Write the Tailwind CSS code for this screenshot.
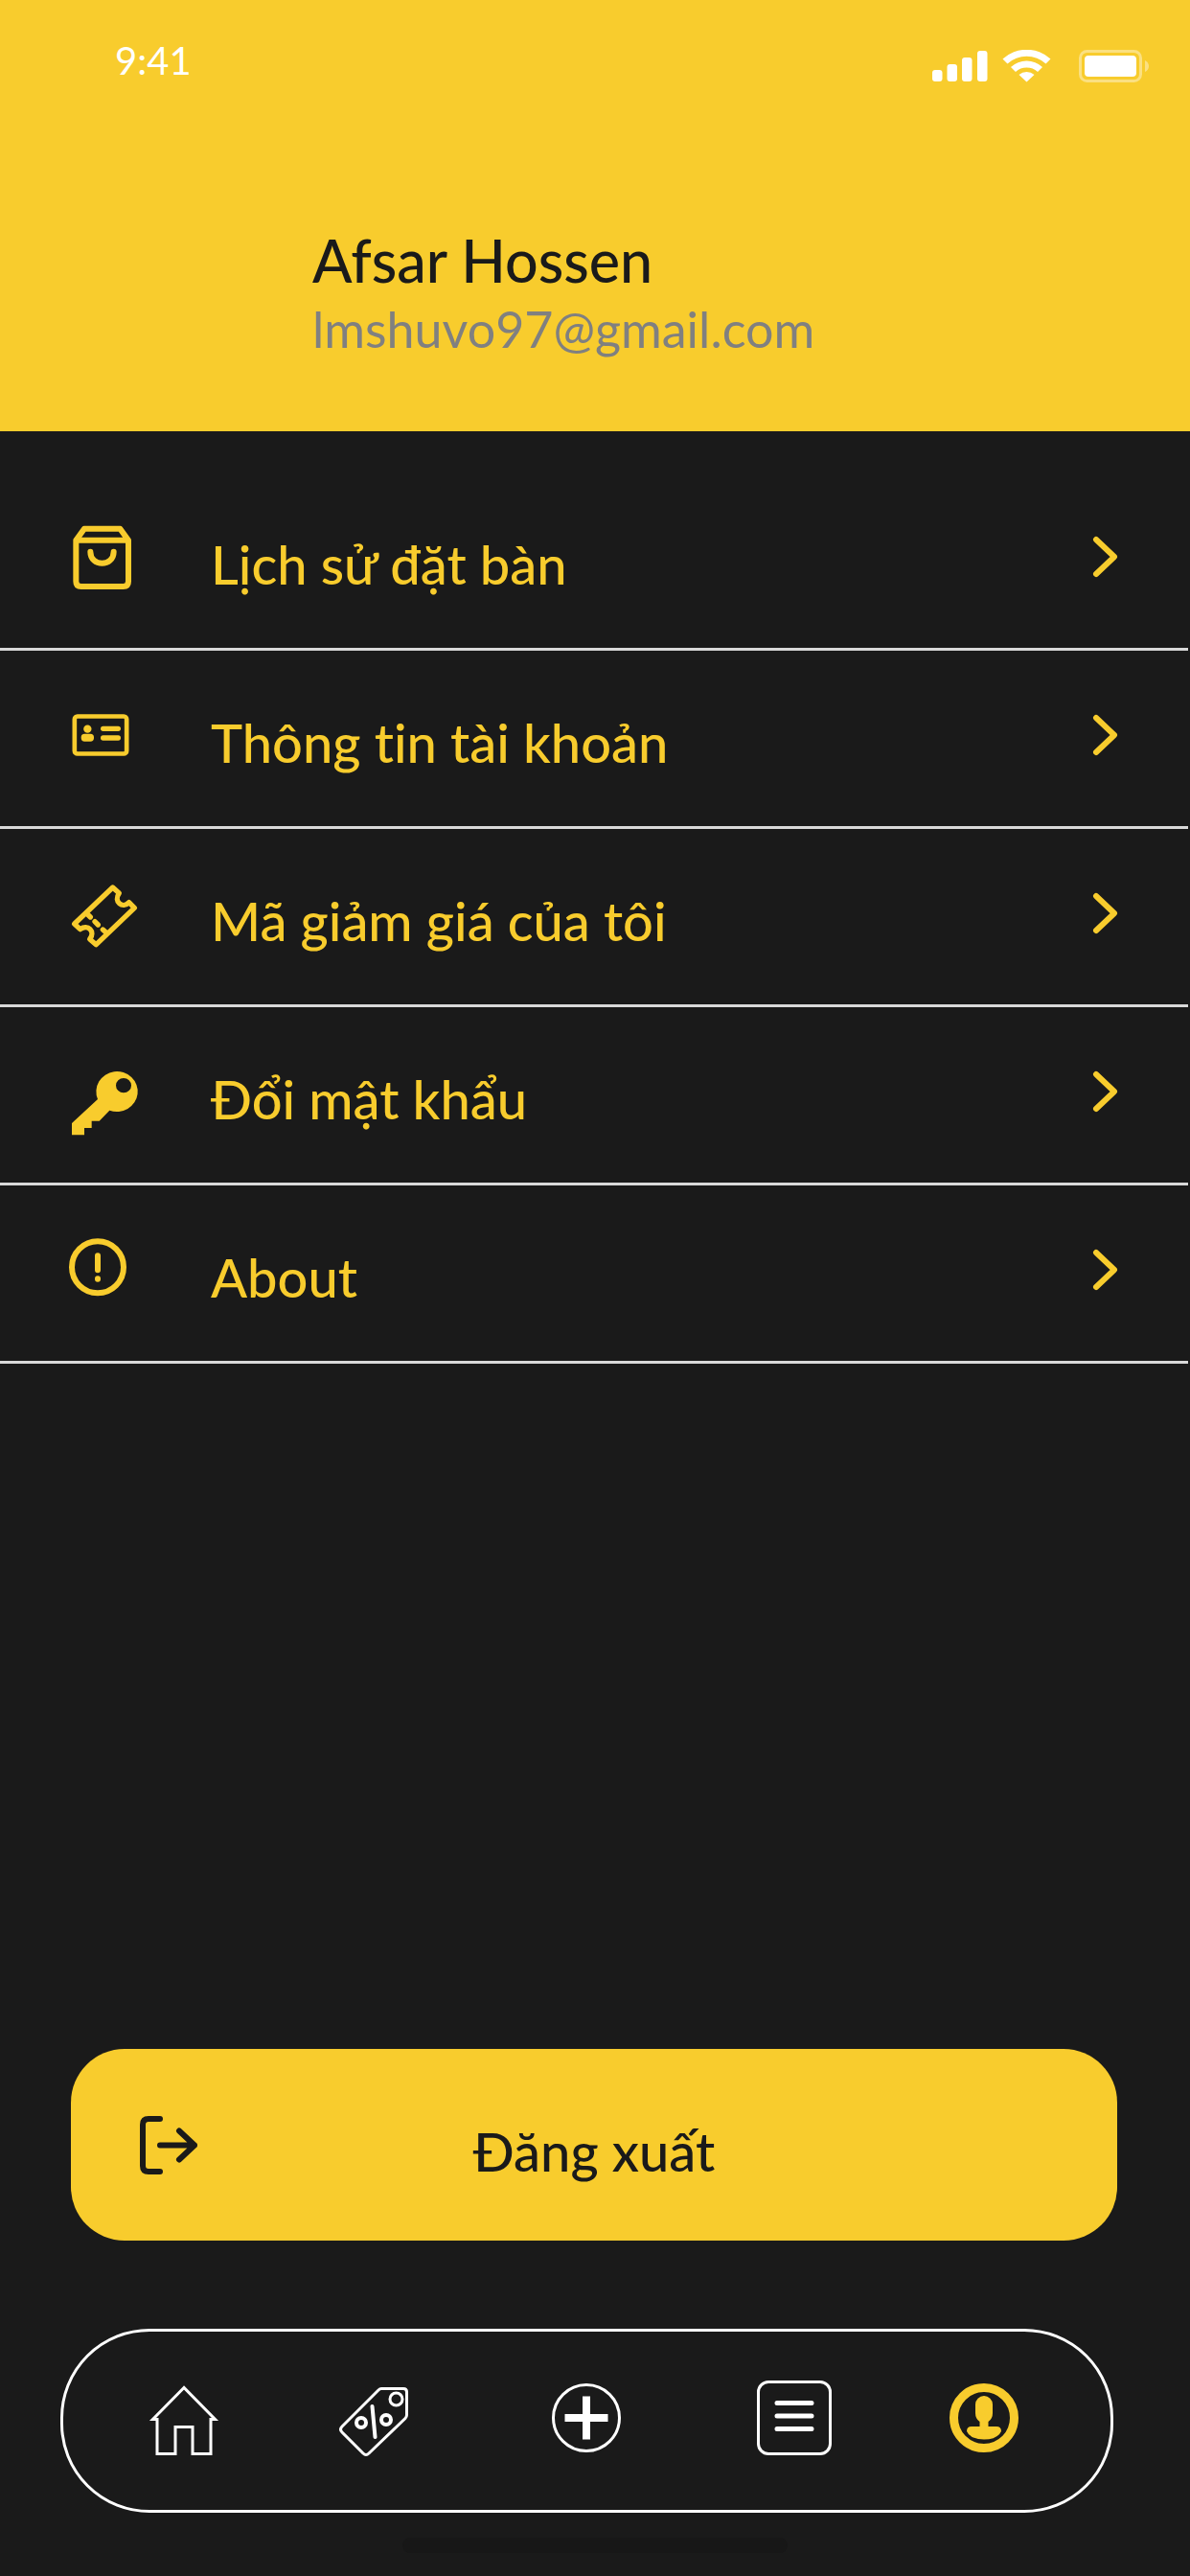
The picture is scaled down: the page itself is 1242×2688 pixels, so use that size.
<!DOCTYPE html>
<html lang="vi">
<head>
<meta charset="utf-8">
<meta name="viewport" content="width=device-width, initial-scale=1">
<title>Tài khoản</title>
<script src="https://cdn.jsdelivr.net/npm/@tailwindcss/browser@4"></script>
</head>
<body class="flex min-h-screen flex-col bg-[#1a1a1a] font-['Lato',sans-serif] font-medium text-[#f8cc2d] [font-variant-ligatures:none]">
<header class="bg-[#f8cc2d] pt-[36px] pb-[74px]">
  <div class="flex items-center justify-between pr-[43px] pl-[120px] text-white">
    <time class="text-[40px] leading-[54px] font-normal">9:41</time>
    <div class="flex items-center pt-[12px]">
      <svg class="h-[34px] w-[58px]" viewBox="0 0 58 34" fill="currentColor" aria-hidden="true"><rect x="0" y="21" width="10.5" height="12" rx="3"/><rect x="15.5" y="15" width="10.5" height="18" rx="3"/><rect x="31" y="8" width="10.500" height="25" rx="3"/><rect x="47" y="1" width="10.500" height="32" rx="3"/></svg>
      <svg class="ml-[15px] h-[34px] w-[51px]" viewBox="0 0 51 34" fill="currentColor" aria-hidden="true"><path d="M0.5 9.500a37 37 0 0 1 50 0L45.500 14.500a30 30 0 0 0-40 0Z"/><path d="M9 18a24.500 24.500 0 0 1 33 0L37 23a17 17 0 0 0-23 0Z"/><path d="M17.500 26a12 12 0 0 1 16 0L25.500 33.500Z"/></svg>
      <svg class="ml-[29px] h-[34px] w-[73px]" viewBox="0 0 73 34" fill="none" aria-hidden="true"><rect x="1.500" y="1.500" width="63" height="31" rx="7" stroke="white" stroke-opacity=".4" stroke-width="3"/><rect x="6" y="6" width="54" height="22" rx="4" fill="white"/><path d="M69 11q4 2 4 6t-4 6Z" fill="white" fill-opacity=".4"/></svg>
    </div>
  </div>
  <div class="pt-[144px] pl-[326px]">
    <h1 class="text-[61px] leading-[76px] font-medium text-[#1a1a1a]">Afsar Hossen</h1>
    <p class="text-[52px] leading-[66px] font-normal text-[#808080]">lmshuvo97@gmail.com</p>
  </div>
</header>

<main class="flex flex-1 flex-col">
  <ul class="mr-0.5 pt-[43px] text-[56px] leading-[66px]">
    <li class="border-b-[3px] border-[#d9d9d9]">
      <a href="#history" class="flex items-center pt-[40px] pr-[72px] pb-[47px] pl-[60px]">
        <svg class="size-[96px]" viewBox="60 41 288 288" fill="none" stroke="currentColor" stroke-width="18" aria-hidden="true"><path d="M118 133 144 97H256L282 133V262Q282 278 266 278H134Q118 278 118 262ZM118 133H282" stroke-linejoin="round"/><path d="M163 169C163 217 236 217 236 169" stroke-linecap="round"/></svg>
        <span class="flex-1 pt-[16px] pl-[64px]">Lịch sử đặt bàn</span>
        <svg class="h-[44px] w-[28px]" viewBox="0 0 28 44" fill="none" stroke="currentColor" stroke-width="6" stroke-linecap="round" stroke-linejoin="round" aria-hidden="true"><path d="M4 4 23 22 4 40"/></svg>
      </a>
    </li>
    <li class="border-b-[3px] border-[#d9d9d9]">
      <a href="#account" class="flex items-center pt-[40px] pr-[72px] pb-[47px] pl-[60px]">
        <svg class="size-[96px]" viewBox="60 599 288 288" fill="currentColor" aria-hidden="true"><rect x="113.500" y="684.500" width="163" height="117" rx="9" fill="none" stroke="currentColor" stroke-width="14"/><circle cx="154" cy="724" r="12.500"/><rect x="134" y="739" width="40" height="24" rx="11"/><rect x="195" y="715" width="63" height="16" rx="8"/><rect x="195" y="744" width="63" height="16" rx="8"/></svg>
        <span class="flex-1 pt-[16px] pl-[64px]">Thông tin tài khoản</span>
        <svg class="h-[44px] w-[28px]" viewBox="0 0 28 44" fill="none" stroke="currentColor" stroke-width="6" stroke-linecap="round" stroke-linejoin="round" aria-hidden="true"><path d="M4 4 23 22 4 40"/></svg>
      </a>
    </li>
    <li class="border-b-[3px] border-[#d9d9d9]">
      <a href="#vouchers" class="flex items-center pt-[40px] pr-[72px] pb-[47px] pl-[60px]">
        <svg class="size-[96px]" viewBox="60 77 288 288" fill="none" stroke="currentColor" stroke-width="16" stroke-linejoin="round" stroke-linecap="round" aria-hidden="true"><path d="M233 140 253 158C234 185 264 208 284 187L301 204 181 319 161 302C180 278 155 254 131 271L113 254Z"/><path d="M151 221 163 233M177 247 187 257M202 272 213 282"/></svg>
        <span class="flex-1 pt-[16px] pl-[64px]">Mã giảm giá của tôi</span>
        <svg class="h-[44px] w-[28px]" viewBox="0 0 28 44" fill="none" stroke="currentColor" stroke-width="6" stroke-linecap="round" stroke-linejoin="round" aria-hidden="true"><path d="M4 4 23 22 4 40"/></svg>
      </a>
    </li>
    <li class="border-b-[3px] border-[#d9d9d9]">
      <a href="#password" class="flex items-center pt-[40px] pr-[72px] pb-[47px] pl-[60px]">
        <svg class="size-[96px]" viewBox="60 635 288 288" fill="currentColor" fill-rule="evenodd" aria-hidden="true"><path d="M186 803 105 878V915H144V893H167V871H191L223 838A65 63 0 1 0 186 803ZM243 760a24 23 0 1 1 48 0a24 23 0 1 1-48 0Z"/></svg>
        <span class="flex-1 pt-[16px] pl-[64px]">Đổi mật khẩu</span>
        <svg class="h-[44px] w-[28px]" viewBox="0 0 28 44" fill="none" stroke="currentColor" stroke-width="6" stroke-linecap="round" stroke-linejoin="round" aria-hidden="true"><path d="M4 4 23 22 4 40"/></svg>
      </a>
    </li>
    <li class="border-b-[3px] border-[#d9d9d9]">
      <a href="#about" class="flex items-center pt-[40px] pr-[72px] pb-[47px] pl-[60px]">
        <svg class="size-[96px]" viewBox="60 1193 288 288" fill="none" stroke="currentColor" stroke-width="18" stroke-linecap="round" aria-hidden="true"><circle cx="186" cy="1329" r="81"/><path d="M186 1293V1338M186 1365V1366"/></svg>
        <span class="flex-1 pt-[16px] pl-[64px]">About</span>
        <svg class="h-[44px] w-[28px]" viewBox="0 0 28 44" fill="none" stroke="currentColor" stroke-width="6" stroke-linecap="round" stroke-linejoin="round" aria-hidden="true"><path d="M4 4 23 22 4 40"/></svg>
      </a>
    </li>
  </ul>

  <div class="mt-auto pt-16 pr-[76px] pl-[74px]">
    <button type="button" class="grid w-full grid-cols-[1fr_auto_1fr] items-center rounded-[56px] bg-[#f8cc2d] px-[72px] py-[60px] text-[56px] leading-[66px] text-[#1a1a1a]">
      <svg class="h-[61px] w-[60px]" viewBox="0 0 60 61" fill="none" stroke="currentColor" stroke-width="6" stroke-linecap="round" stroke-linejoin="round" aria-hidden="true"><path d="M21 3H9Q3 3 3 9V52Q3 58 9 58H21M21 30.500H57M41 15.500 57 30.500 41 45.500"/></svg>
      <span class="pt-[14px]">Đăng xuất</span>
    </button>
  </div>
</main>

<footer class="pt-[92px] pb-[24px]">
  <nav class="mr-[80px] ml-[63px] grid grid-cols-[198fr_198fr_246fr_186fr_210fr] items-center justify-items-center rounded-[93px] border-[3px] border-white px-[27px] py-[45px] text-white">
    <a href="#home" aria-label="Trang chủ"><svg class="size-[96px]" viewBox="0 0 96 96" fill="none" stroke="currentColor" stroke-width="3"><path d="M48 13.500 15.500 46.500H20V82.500H39V54.500H57V82.500H76V46.500H80.500Z" stroke-linejoin="miter"/></svg></a>
    <a href="#deals" aria-label="Ưu đãi"><svg class="size-[96px]" viewBox="0 0 96 96" fill="none" stroke="currentColor" stroke-width="3" stroke-linejoin="round"><path d="M56 14.500H79Q82.500 14.500 82.500 18V42Q82.500 44 81 45.500L43 82Q40 85 37 82L15 60Q12 57 15 54L53 16Q54.500 14.500 56 14.500Z"/><circle cx="71.500" cy="25.500" r="6.500"/><circle cx="35" cy="50" r="5" stroke-width="4"/><circle cx="61" cy="47" r="5" stroke-width="4"/><path d="M46.500 33 49.500 65" stroke-width="4" stroke-linecap="round"/></svg></a>
    <a href="#new" aria-label="Thêm"><svg class="size-[96px]" viewBox="0 0 96 96" fill="none" stroke="currentColor" stroke-width="3"><circle cx="48" cy="45" r="34.500"/><path d="M48 22.500V67.500M25.500 45H70.500" stroke-width="8"/></svg></a>
    <a href="#orders" aria-label="Danh sách"><svg class="size-[96px]" viewBox="0 0 96 96" fill="none" stroke="currentColor" stroke-width="3"><rect x="10.500" y="7.500" width="75" height="75" rx="10.500"/><path d="M30 29.500H66M30 43H66M30 56.500H66" stroke-width="5" stroke-linecap="round"/></svg></a>
    <a href="#profile" aria-label="Tài khoản" class="text-[#f8cc2d]"><svg class="size-[96px]" viewBox="0 0 96 96" fill="currentColor"><circle cx="48" cy="45" r="31.500" fill="none" stroke="currentColor" stroke-width="9"/><path d="M39 31a9 9 0 0 1 18 0V40Q57 46 52.500 49V54H61Q66 54 66 59Q62 67.500 48 67.500T30 59Q30 54 35 54H43.500V49Q39 46 39 40Z"/></svg></a>
  </nav>
  <div class="mx-auto mt-[26px] h-[16px] w-[402px] rounded-full bg-[#171717]"></div>
</footer>
</body>
</html>
